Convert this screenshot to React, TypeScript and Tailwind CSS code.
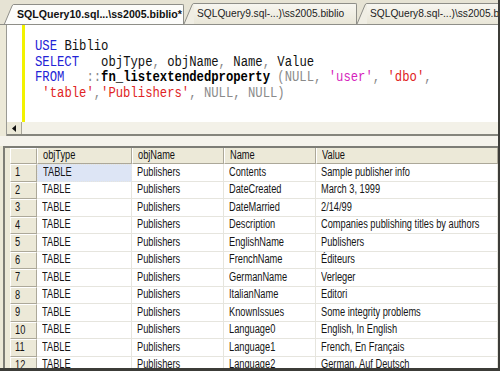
import React from "react";

const rows: [string, string][] = [
  ["Contents", "Sample publisher info"],
  ["DateCreated", "March 3, 1999"],
  ["DateMarried", "2/14/99"],
  ["Description", "Companies publishing titles by authors"],
  ["EnglishName", "Publishers"],
  ["FrenchName", "Éditeurs"],
  ["GermanName", "Verleger"],
  ["ItalianName", "Editori"],
  ["KnownIssues", "Some integrity problems"],
  ["Language0", "English, In English"],
  ["Language1", "French, En Français"],
  ["Language2", "German, Auf Deutsch"],
];

function T({ children }: { children: React.ReactNode }) {
  return (
    <span className="inline-block origin-left scale-x-[0.74] whitespace-nowrap">
      {children}
    </span>
  );
}

function Slant({ fill }: { fill: string }) {
  return (
    <svg width="10" height="21" viewBox="0 0 10 21" className="block shrink-0">
      <path d="M0 21 L8 2 Q9 0 10.5 0 L10.5 21 Z" fill={fill} />
      <path d="M0 21 L8 2 Q9 0 10.5 0" fill="none" stroke="#8e8e88" strokeWidth="1" />
    </svg>
  );
}

function Tab({ label, active, w }: { label: string; active?: boolean; w: string }) {
  return (
    <div className={`flex items-end shrink-0 ${active ? "-mb-px relative z-10" : ""}`}>
      <Slant fill={active ? "#fcfcfa" : "#f0eee4"} />
      <div
        className={`${w} h-[21px] flex items-center border-t border-r border-[#8e8e88] rounded-tr-[2px] ${
          active
            ? "bg-[#fcfcfa] font-bold text-[10.6px] text-[#111]"
            : "bg-gradient-to-b from-[#f7f6f0] to-[#e9e6d8] text-[10.2px] text-[#222]"
        } whitespace-nowrap overflow-hidden pl-[3px]`}
      >
        {label}
      </div>
    </div>
  );
}

const cols = ["w-[95px] shrink-0", "w-[92px] shrink-0", "w-[92px] shrink-0", "flex-1 min-w-0"];

export default function App() {
  return (
    <div className="w-[500px] h-[371px] overflow-hidden bg-[#ece9d8] flex flex-col border-r-2 border-b-[3px] border-[#3c3c38] font-['Liberation_Sans',Arial,sans-serif]">
      {/* Tabs */}
      <div className="h-[25px] shrink-0 flex items-end pl-[4px] border-b border-[#8e8e88] bg-[#e6e3d4] overflow-hidden">
        <Tab active label="SQLQuery10.sql...\ss2005.biblio*" w="w-[170px]" />
        <Tab label="SQLQuery9.sql-...)\ss2005.biblio" w="w-[163px]" />
        <Tab label="SQLQuery8.sql-...)\ss2005.biblio" w="w-[150px]" />
      </div>

      {/* Editor */}
      <div className="flex shrink-0 pl-[6px]">
        <div className="flex-1 flex flex-col border-l border-[#9a9a94]">
          <div className="h-[97px] flex bg-white overflow-hidden">
            <div className="w-[15px] bg-white" />
            <div className="w-[3px] bg-[#f2f200]" />
            <div className="flex-1 pl-[10px] pt-[14px] font-['Liberation_Mono','Courier_New',monospace] text-[14px] leading-[15.7px] text-[#111]">
              <div className="origin-left scale-x-[0.874] whitespace-pre">
                <div>
                  <span className="text-[#2323d6]">USE</span> Biblio
                </div>
                <div>
                  <span className="text-[#2323d6]">SELECT</span>   objType<span className="text-[#8a8a8a]">,</span> objName<span className="text-[#8a8a8a]">,</span> Name<span className="text-[#8a8a8a]">,</span> Value
                </div>
                <div>
                  <span className="text-[#2323d6]">FROM</span>   <span className="text-[#8a8a8a]">::</span><span className="font-bold text-[#000]">fn_listextendedproperty</span> <span className="text-[#8a8a8a]">(NULL, </span><span className="text-[#d61fbd]">'user'</span><span className="text-[#8a8a8a]">, </span><span className="text-[#e02424]">'dbo'</span><span className="text-[#8a8a8a]">,</span>
                </div>
                <div>
                  {" "}<span className="text-[#e02424]">'table'</span><span className="text-[#8a8a8a]">,</span><span className="text-[#e02424]">'Publishers'</span><span className="text-[#8a8a8a]">, NULL, NULL)</span>
                </div>
              </div>
            </div>
          </div>
          {/* Scrollbar */}
          <div className="h-[14px] flex bg-[#f3f1e8] border-b-2 border-[#85857d]">
            <div className="w-[15px] h-full flex items-center justify-center bg-[#ece9d8] border-r border-[#a8a69a]">
              <svg width="5" height="7" viewBox="0 0 5 7">
                <path d="M4 0 L0 3.5 L4 7 Z" fill="#111" />
              </svg>
            </div>
          </div>
        </div>
      </div>

      {/* Splitter gap */}
      <div className="h-[10px] shrink-0 bg-[#f5f3ec]" />

      {/* Grid */}
      <div className="flex-1 min-h-0 flex pl-[3px]">
        <div className="flex-1 min-w-0 flex flex-col border-l-2 border-t-2 border-[#7d7d76] pl-[5px] bg-[#ece9d8] overflow-hidden">
          {/* Header */}
          <div className="h-[16px] shrink-0 flex text-[12.5px] text-[#111]">
            <div className="w-[27px] shrink-0 h-full bg-[#ece9d8] border-t border-l border-white border-r border-b border-r-[#aca899] border-b-[#aca899]" />
            {["objType", "objName", "Name", "Value"].map((h, i) => (
              <div
                key={h}
                className={`${cols[i]} h-full flex items-center pl-[5px] bg-[#ece9d8] border-r border-b border-r-[#aca899] border-b-[#aca899] border-l border-l-white overflow-hidden`}
              >
                <T>{h}</T>
              </div>
            ))}
          </div>
          {/* Rows */}
          {rows.map(([name, value], r) => (
            <div key={r} className="h-[17.5px] shrink-0 flex text-[12.5px] text-[#151515]">
              <div className="w-[27px] shrink-0 h-full flex items-center pl-[4px] bg-[#ece9d8] border-t border-l border-white border-r border-b border-r-[#aca899] border-b-[#aca899]">
                <T>{r + 1}</T>
              </div>
              {["TABLE", "Publishers", name, value].map((c, i) => (
                <div
                  key={i}
                  className={`${cols[i]} h-full flex items-center pl-[5px] border-r border-b border-[#e6e5de] overflow-hidden ${
                    r === 0 && i === 0
                      ? "bg-[#dde5f5] border border-dotted border-[#555]"
                      : "bg-white"
                  }`}
                >
                  <T>{c}</T>
                </div>
              ))}
            </div>
          ))}
        </div>
      </div>
    </div>
  );
}
